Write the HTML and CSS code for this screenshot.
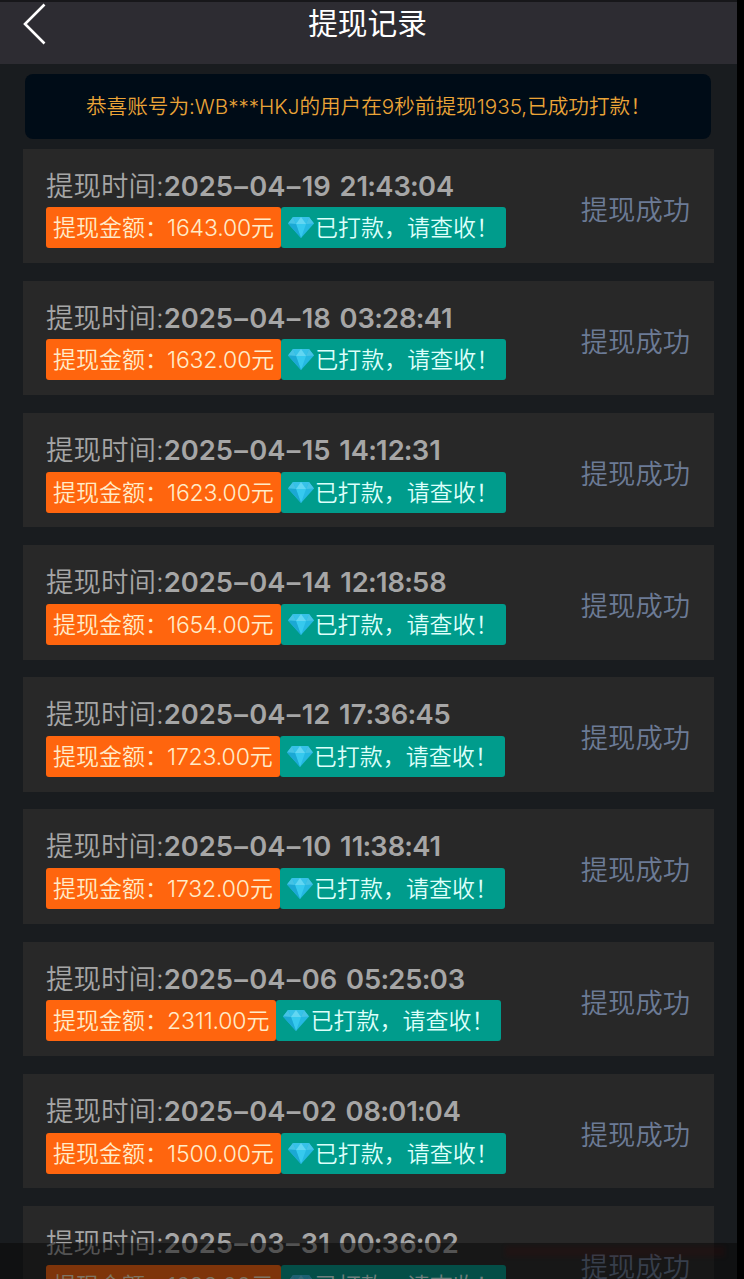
FILE: index.html
```
<!DOCTYPE html>
<html lang="zh-CN">
<head>
<meta charset="utf-8">
<title>提现记录</title>
<link rel="stylesheet" href="styles.css">
</head>
<body>
<svg class="defs" aria-hidden="true">
  <defs>
    <symbol id="gem" viewBox="0 0 26 22">
      <path d="M5 1H21L26 7.500L13 22L0 7.500Z" fill="#25b8e2"/>
      <path d="M5 1L8 8L0 7.500ZM21 1L18 8L26 7.500Z" fill="#45c3e5"/>
      <path d="M5 1H21L18 8H8Z" fill="#36c2e8"/>
      <path d="M8 8L13 1L18 8Z" fill="#62d6f2"/>
      <path d="M8 8H18L13 22Z" fill="#36c9ee"/>
      <path d="M0 7.500L8 8L13 22Z" fill="#1ba8d4"/>
    </symbol>
  </defs>
</svg>
<div class="screen">
  <header class="bar">
    <svg class="back" viewBox="0 0 24 42"><path d="M21.500 1.500L2 21L21.500 40.500" fill="none" stroke="#fff" stroke-width="2.600"/></svg>
    <h1 class="title">提现记录</h1>
  </header>
  <div class="notice">恭喜账号为:WB***HKJ的用户在9秒前提现1935,已成功打款！</div>
  <main class="list" id="list"></main>
  <div class="shade"><div class="glow"></div></div>
</div>
<script src="app.js"></script>
</body>
</html>
```
FILE: styles.css
```
* { box-sizing: border-box; }
body {
  margin: 0;
  background: #000;
  font-family: Inter, "Noto Sans CJK SC", sans-serif;
  font-weight: 350;
}
.defs { position: absolute; width: 0; height: 0; }
.screen {
  position: relative;
  width: 737px;
  height: 1279px;
  overflow: hidden;
  background: #191c1f;
}
.bar {
  display: grid;
  grid-template-columns: 79px 1fr 81px;
  height: 64px;
  border-top: 2px solid #17171a;
  background: #2d2c32;
}
.back { width: 24px; height: 42px; margin: 1px 0 0 23px; }
.title {
  margin: 0;
  color: #fff;
  font-size: 29.700px;
  font-weight: 400;
  line-height: 43px;
  text-align: center;
}
.notice {
  width: 686px;
  height: 65px;
  margin: 10px 0 0 25px;
  padding-left: 61px;
  border-radius: 8px;
  background: #000c17;
  color: #eba437;
  font-size: 20.620px;
  line-height: 66px;
  white-space: nowrap;
}
.list {
  display: flex;
  flex-direction: column;
  gap: 17.700px;
  margin: 9.500px 23px 0;
}
.card {
  display: flex;
  flex: none;
  justify-content: space-between;
  height: 114.500px;
  padding: 20px 24px 0 23px;
  background: #282828;
}
.time { height: 38.800px; line-height: 34px; font-size: 27.500px; color: #a6a6a6; white-space: nowrap; }
.date { font-size: 27.300px; font-weight: 600; word-spacing: 2px; }
.dash { margin: 0 1.300px; }
.colon { margin: 0 -.8px; }
.tags { display: flex; }
.tag {
  height: 41px;
  padding: 0 7px;
  border-radius: 3px;
  font-size: 23px;
  line-height: 43px;
  white-space: nowrap;
}
.amount { background: #ff650e; color: #ffebc8; }
.sum { margin-left: -1px; letter-spacing: -.15px; }
.paid { display: flex; width: 225px; background: #009c8c; color: #dcfffa; }
.gem { flex: none; width: 26px; height: 22px; margin: 9px 1px 0 0; }
.status { margin-top: 21px; line-height: 41px; font-size: 27.300px; color: #6c7b96; }
.shade {
  position: absolute;
  left: 0;
  right: 0;
  bottom: 0;
  height: 36px;
  background: rgba(8, 8, 8, .52);
}
.glow {
  width: 220px;
  height: 11px;
  margin: 3px 0 0 505px;
  background: rgba(90, 0, 0, .12);
  filter: blur(2px);
}
```
FILE: app.js
```
const records = [
  ["2025–04–19 21:43:04", "1643.00"],
  ["2025–04–18 03:28:41", "1632.00"],
  ["2025–04–15 14:12:31", "1623.00"],
  ["2025–04–14 12:18:58", "1654.00"],
  ["2025–04–12 17:36:45", "1723.00"],
  ["2025–04–10 11:38:41", "1732.00"],
  ["2025–04–06 05:25:03", "2311.00"],
  ["2025–04–02 08:01:04", "1500.00"],
  ["2025–03–31 00:36:02", "1688.00"]
];
const marks = { ":": "colon", "–": "dash" };
const spaced = (date) => date.replace(/[:–]/g, (c) => `<span class="${marks[c]}">${c}</span>`);
document.getElementById("list").innerHTML = records.map(([date, sum]) => `
  <section class="card">
    <div>
      <div class="time">提现时间:<span class="date">${spaced(date)}</span></div>
      <div class="tags">
        <div class="tag amount">提现金额：<span class="sum">${sum}</span>元</div>
        <div class="tag paid"><svg class="gem"><use href="#gem"/></svg>已打款，请查收！</div>
      </div>
    </div>
    <div class="status">提现成功</div>
  </section>`).join("");
```
